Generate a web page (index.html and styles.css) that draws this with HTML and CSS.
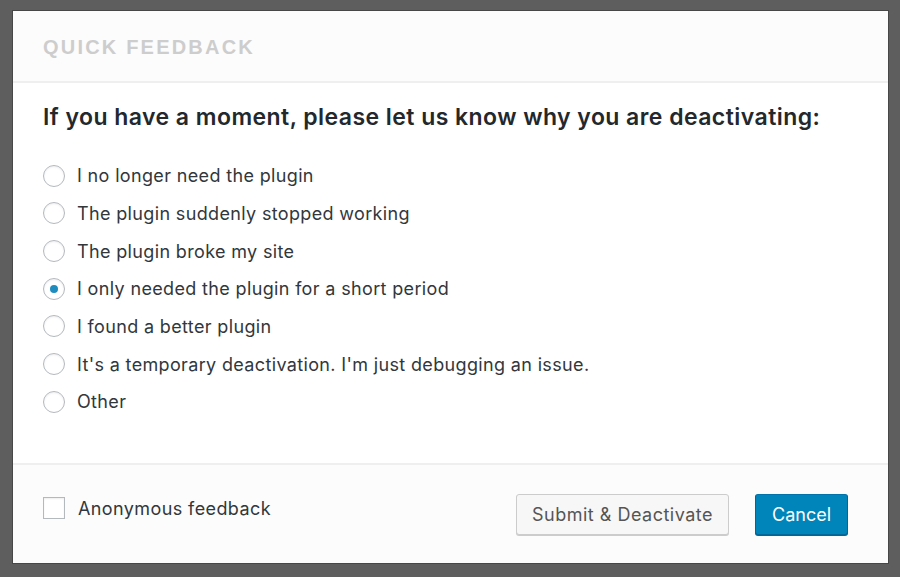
FILE: index.html
```html
<!DOCTYPE html>
<html>
<head>
<meta charset="utf-8">
<link rel="stylesheet" href="styles.css">
</head>
<body>
<div class="backdrop">
  <div class="dialog">
    <div class="dialog-header">
      <h2 class="dialog-title">Quick Feedback</h2>
    </div>
    <div class="dialog-body">
      <h3 class="question">If you have a moment, please let us know why you are deactivating:</h3>
      <ul class="reasons">
        <li class="reason"><span class="radio"></span><span class="label">I no longer need the plugin</span></li>
        <li class="reason"><span class="radio"></span><span class="label">The plugin suddenly stopped working</span></li>
        <li class="reason"><span class="radio"></span><span class="label">The plugin broke my site</span></li>
        <li class="reason"><span class="radio checked"></span><span class="label">I only needed the plugin for a short period</span></li>
        <li class="reason"><span class="radio"></span><span class="label">I found a better plugin</span></li>
        <li class="reason"><span class="radio"></span><span class="label">It's a temporary deactivation. I'm just debugging an issue.</span></li>
        <li class="reason"><span class="radio"></span><span class="label">Other</span></li>
      </ul>
    </div>
    <div class="dialog-footer">
      <label class="anon"><span class="checkbox"></span><span class="anon-label">Anonymous feedback</span></label>
      <div class="actions">
        <button class="btn btn-secondary">Submit &amp; Deactivate</button>
        <button class="btn btn-primary">Cancel</button>
      </div>
    </div>
  </div>
</div>
</body>
</html>
```

FILE: styles.css
```css
html, body {
  margin: 0;
  padding: 0;
  background: #5e5e5e;
}
body {
  font-family: Inter, "Liberation Sans", sans-serif;
  width: 900px;
  height: 577px;
  overflow: hidden;
}
.backdrop {
  padding: 10px 11px 12px 12px;
}
.dialog {
  border: 1px solid #474747;
  background: #fff;
  height: 552px;
  display: flex;
  flex-direction: column;
}
.dialog-header {
  background: #fcfcfc;
  height: 72px;
  border-bottom: 2px solid #efefef;
  box-sizing: border-box;
  display: flex;
  align-items: center;
  padding: 0 30px;
}
.dialog-title {
  margin: 0;
  font-family: "Liberation Sans", Arial, sans-serif;
  font-size: 20px;
  font-weight: bold;
  letter-spacing: 2.2px;
  text-transform: uppercase;
  color: #cdcdcd;
  padding-top: 2px;
}
.dialog-body {
  flex: 1;
  padding: 18px 30px 0 30px;
}
.question {
  margin: 0 0 24px 0;
  font-size: 23px;
  letter-spacing: 0.45px;
  font-weight: 600;
  color: #23282d;
  line-height: 32px;
}
.reasons {
  list-style: none;
  margin: 0;
  padding: 0;
  display: grid;
  grid-auto-rows: 37.67px;
}
.reason {
  display: flex;
  align-items: center;
}
.radio {
  width: 22px;
  height: 22px;
  box-sizing: border-box;
  border: 1px solid #b4b9be;
  border-radius: 50%;
  background: #fff;
  box-shadow: inset 0 1px 2px rgba(0,0,0,0.07);
  display: flex;
  align-items: center;
  justify-content: center;
  flex: none;
}
.radio.checked::after {
  content: "";
  width: 8px;
  height: 8px;
  border-radius: 50%;
  background: #1e8cbe;
}
.label {
  margin-left: 12px;
  font-size: 18px;
  letter-spacing: 0.35px;
  color: #32373c;
}
.dialog-footer {
  background: #fcfcfc;
  border-top: 2px solid #efefef;
  height: 100px;
  box-sizing: border-box;
  display: flex;
  align-items: center;
  justify-content: space-between;
  padding: 0 40px 0 30px;
}
.anon {
  display: flex;
  align-items: center;
  margin-top: -12px;
}
.checkbox {
  width: 22px;
  height: 22px;
  box-sizing: border-box;
  border: 1px solid #b4b9be;
  background: #fff;
  box-shadow: inset 0 1px 2px rgba(0,0,0,0.07);
}
.anon-label {
  margin-left: 13px;
  font-size: 18px;
  letter-spacing: 0.4px;
  color: #32373c;
}
.actions {
  display: flex;
  gap: 26px;
}
.btn {
  font-family: Inter, "Liberation Sans", sans-serif;
  font-size: 18px;
  height: 41px;
  border-radius: 3px;
  padding: 0 10px;
  box-sizing: border-box;
  border: 1px solid #cccccc;
}
.btn-secondary {
  background: #f7f7f7;
  color: #555;
  letter-spacing: 0.5px;
  box-shadow: 0 1px 0 #ccc;
  width: 213px;
}
.btn-primary {
  background: #0085ba;
  border-color: #0073aa #006799 #006799;
  color: #fff;
  box-shadow: 0 1px 0 #006799;
  width: 93px;
}
```
